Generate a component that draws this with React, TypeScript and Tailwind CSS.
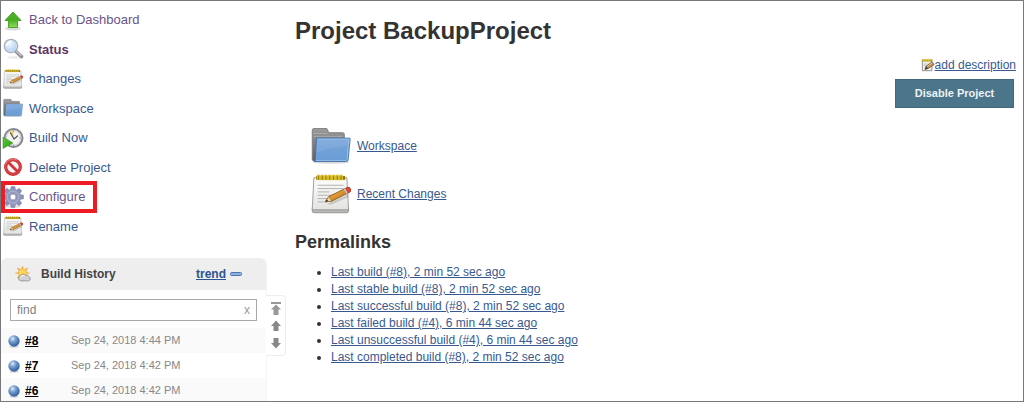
import React from "react";

type taskType = {
  label: string;
  icon: React.ReactNode;
  active?: boolean;
  visited?: boolean;
  highlighted?: boolean;
};
type buildType = {
  id: string;
  date: string;
};

type iconProps = {
  className?: string;
};

function UpArrowIcon({ className }: iconProps) {
  return (
    <svg viewBox="0 0 24 24" className={className} aria-hidden="true">
      <defs>
        <linearGradient id="green" x1="0" y1="0" x2="0" y2="1">
          <stop offset="0" stopColor="#4fb52c" />
          <stop offset="0.5" stopColor="#48ac22" />
          <stop offset="1" stopColor="#8fdc5c" />
        </linearGradient>
      </defs>
      <ellipse cx="12" cy="20.5" rx="8" ry="2" fill="#dcdcdc" />
      <path
        d="M12 4 20 12.500H16.500V19.500H7.500V12.500H4Z"
        fill="url(#green)"
        stroke="#4aa526"
        strokeLinejoin="round"
      />
    </svg>
  );
}

function SearchIcon({ className }: iconProps) {
  return (
    <svg viewBox="0 0 24 24" className={className} aria-hidden="true">
      <defs>
        <radialGradient id="lens" cx="0.4" cy="0.35" r="0.7">
          <stop offset="0" stopColor="#f2f8ff" />
          <stop offset="0.6" stopColor="#c3dcf7" />
          <stop offset="1" stopColor="#9cc0ea" />
        </radialGradient>
      </defs>
      <ellipse cx="14" cy="20.500" rx="8" ry="1.500" fill="#ececec" />
      <path d="M15 14.500 20.500 19.500" stroke="#8a8b90" strokeWidth="3.600" strokeLinecap="round" />
      <path d="M15.500 14.500 20 18.500" stroke="#c4c5c9" strokeWidth="1.500" strokeLinecap="round" />
      <circle cx="10" cy="9" r="6.600" fill="url(#lens)" stroke="#a9b0bd" strokeWidth="1.500" />
      <circle cx="10" cy="9" r="5.500" fill="none" stroke="#dce8f6" strokeWidth="0.800" />
      <path d="M6 9a4.500 4.500 0 0 1 4-4.500" fill="none" stroke="#fff" strokeWidth="1.500" />
    </svg>
  );
}

function NotepadIcon({ className }: iconProps) {
  return (
    <svg viewBox="0 0 48 48" className={className} aria-hidden="true">
      <defs>
        <linearGradient id="paper" x1="0" y1="0" x2="0" y2="1">
          <stop offset="0" stopColor="#fdfdfd" />
          <stop offset="1" stopColor="#e3e3e1" />
        </linearGradient>
        <linearGradient id="pencil" x1="0" y1="0" x2="1" y2="1">
          <stop offset="0" stopColor="#f6c26a" />
          <stop offset="0.5" stopColor="#dc9434" />
          <stop offset="1" stopColor="#8f5208" />
        </linearGradient>
      </defs>
      <path d="M1.500 41h43.500v3.500a2 2 0 0 1-2 2H3.500a2 2 0 0 1-2-2z" fill="#b9b9b7" stroke="#8b8b89" />
      <path d="M3.500 4.500h39.500L45 42a1 1 0 0 1-1 1H2.500a1 1 0 0 1-1-1z" fill="url(#paper)" stroke="#8f8f8d" />
      <path d="M8 13.500h31M8 17.500h31M8 21.500h14M8 25.500h24M8 29.500h12M8 33.500h8" stroke="#b4b4b2" strokeWidth="1.200" />
      <path d="M6 2.500h35v4.500H6z" fill="#8c7606" />
      <g fill="none" stroke="#d9bd2d" strokeWidth="1.800">
        <path d="M7.500 7.500V3a1.500 1.500 0 0 1 3 0V7.500M12 7.500V3a1.500 1.500 0 0 1 3 0V7.500M16.500 7.500V3a1.500 1.500 0 0 1 3 0V7.500M21 7.500V3a1.500 1.500 0 0 1 3 0V7.500M25.500 7.500V3a1.500 1.500 0 0 1 3 0V7.500M30 7.500V3a1.500 1.500 0 0 1 3 0V7.500M34.500 7.500V3a1.500 1.500 0 0 1 3 0V7.500" />
      </g>
      <path d="M19 36 45 24v4L24 37z" fill="#777" opacity="0.3" />
      <path d="M17 33.500 21.500 27 43 16.500a3 3 0 0 1 3 5.500L25 32.500z" fill="url(#pencil)" stroke="#87500d" />
      <path d="M17 33.500 21.500 27l3.500 5.500z" fill="#ecd6a8" stroke="#87500d" strokeWidth="0.600" />
      <path d="m17 33.500 2-3 1.500 2z" fill="#222" />
      <path d="m39.500 18.200 2-1 3 5.500-2 1z" fill="#c3c9d3" />
      <path d="m41.500 17.200 2.200-1a3.200 3.200 0 0 1 3 5.500l-2.200 1z" fill="#df4440" stroke="#a52b28" strokeWidth="0.600" />
    </svg>
  );
}

function FolderIcon({ className }: iconProps) {
  return (
    <svg viewBox="0 0 48 48" className={className} aria-hidden="true">
      <defs>
        <linearGradient id="folderBack" x1="0" y1="0" x2="0" y2="1">
          <stop offset="0" stopColor="#9b9b9b" />
          <stop offset="1" stopColor="#5f5f5f" />
        </linearGradient>
        <linearGradient id="folderFront" x1="0" y1="0" x2="0" y2="1">
          <stop offset="0" stopColor="#7ba6da" />
          <stop offset="1" stopColor="#689bd6" />
        </linearGradient>
      </defs>
      <ellipse cx="24" cy="43.500" rx="22" ry="1.800" fill="#d6d6d6" />
      <path
        d="M1.500 5a2 2 0 0 1 2-2h14.500a2 2 0 0 1 2 1.500l1.200 3.500H38a2 2 0 0 1 2 2V42H3.500a2 2 0 0 1-2-2z"
        fill="url(#folderBack)"
        stroke="#777"
      />
      <path d="M3 9h17M3 12.500h35" stroke="#b5b5b5" strokeWidth="0.800" />
      <path d="M6.500 14.500H46a1 1 0 0 1 1 1.200L44.500 41a2 2 0 0 1-2 1.500H3.500A1.500 1.500 0 0 0 5 41z" fill="url(#folderFront)" stroke="#3b6daa" />
      <path d="M7.500 15.700h38L43.300 40.500a1 1 0 0 1-1 .800H6" fill="none" stroke="#a9c8ec" strokeWidth="0.900" />
      <path d="M6.500 32c12-6 24-6 38-9l1-6.500H7.500z" fill="#fff" opacity="0.080" />
    </svg>
  );
}

function ClockIcon({ className }: iconProps) {
  return (
    <svg viewBox="0 0 24 24" className={className} aria-hidden="true">
      <defs>
        <linearGradient id="play" x1="0" y1="0" x2="1" y2="1">
          <stop offset="0" stopColor="#5ecb3b" />
          <stop offset="1" stopColor="#2a9914" />
        </linearGradient>
      </defs>
      <circle cx="12.500" cy="12" r="9" fill="#f3f3f1" stroke="#84868c" strokeWidth="2" />
      <circle cx="12.500" cy="12" r="7.400" fill="none" stroke="#c9cbd0" />
      <path d="M12.500 12V5A8 8 0 0 0 8.500 6Z" fill="#eed35a" />
      <path d="M13 13 9.500 7M13 13l3.500-3" stroke="#555" strokeWidth="1.200" strokeLinecap="round" />
      <path d="M12.500 4.500v1M19.500 12h-1M12.500 19.500v-1" stroke="#777" />
      <path d="M2 11 12 17 2 22.500Z" fill="url(#play)" stroke="#3c9a27" strokeWidth="0.600" />
    </svg>
  );
}

function ForbiddenIcon({ className }: iconProps) {
  return (
    <svg viewBox="0 0 24 24" className={className} aria-hidden="true">
      <circle cx="12" cy="12" r="7.300" fill="#f7f3f3" stroke="#c22c30" strokeWidth="3.200" />
      <circle cx="12" cy="12" r="7.300" fill="none" stroke="#d93f44" strokeWidth="2" />
      <path d="m7 7 10 10" stroke="#d03438" strokeWidth="2.800" />
      <path d="M4.500 9.500A8 8 0 0 1 16 5" fill="none" stroke="#f08a8a" strokeWidth="0.800" />
    </svg>
  );
}

function GearIcon({ className }: iconProps) {
  return (
    <svg viewBox="0 0 24 24" className={className} aria-hidden="true">
      <ellipse cx="12" cy="21.500" rx="8" ry="1.500" fill="#dedede" />
      <g fill="#8b91b6" stroke="#7b81a6" strokeWidth="0.500">
        <path d="m10.200 1.500h3.600l.8 4h-5.200zM10.200 22.500h3.600l.8-4h-5.200z" />
        <path d="m10.200 1.500h3.600l.8 4h-5.200zM10.200 22.500h3.600l.8-4h-5.200z" transform="rotate(45 12 12)" />
        <path d="m10.200 1.500h3.600l.8 4h-5.200zM10.200 22.500h3.600l.8-4h-5.200z" transform="rotate(90 12 12)" />
        <path d="m10.200 1.500h3.600l.8 4h-5.200zM10.200 22.500h3.600l.8-4h-5.200z" transform="rotate(135 12 12)" />
      </g>
      <circle cx="12" cy="12" r="5.500" fill="none" stroke="#9298bb" strokeWidth="4.800" />
      <circle cx="12" cy="12" r="5.800" fill="none" stroke="#a9aecb" strokeWidth="1.200" />
      <circle cx="12" cy="12" r="2.900" fill="#fff" stroke="#7b81a6" strokeWidth="0.700" />
    </svg>
  );
}

function WeatherIcon({ className }: iconProps) {
  return (
    <svg viewBox="0 0 16 16" className={className} aria-hidden="true">
      <g stroke="#eda34a" strokeWidth="1.200" strokeLinecap="round">
        <path d="M7.500.800v14M.800 7h13.400M2.700 2.300l9.600 9.400M12.300 2.300 2.700 11.700" />
      </g>
      <circle cx="7.500" cy="7" r="4.300" fill="#fbd65a" stroke="#eda63e" strokeWidth="0.800" />
      <path
        d="M5.500 14.800a2.300 2.300 0 0 1-.300-4.500 3 3 0 0 1 5.300-1 2.500 2.500 0 0 1 3.300 1.400 2.100 2.100 0 0 1-.300 4.100z"
        fill="#d0d1d2"
        stroke="#8c8e90"
        strokeWidth="0.800"
      />
      <path d="M5.500 11.800a2.300 2.300 0 0 1 4-1.500" fill="none" stroke="#fff" />
    </svg>
  );
}

function BallIcon({ className }: iconProps) {
  return (
    <svg viewBox="0 0 16 16" className={className} aria-hidden="true">
      <defs>
        <radialGradient id="ball" cx="0.380" cy="0.300" r="0.750">
          <stop offset="0" stopColor="#e3edf9" />
          <stop offset="0.350" stopColor="#7ba3d3" />
          <stop offset="0.750" stopColor="#4370ae" />
          <stop offset="1" stopColor="#305a96" />
        </radialGradient>
      </defs>
      <ellipse cx="8" cy="14.500" rx="5.500" ry="1.200" fill="#dadada" />
      <circle cx="8" cy="8" r="6.500" fill="url(#ball)" />
    </svg>
  );
}

function EditIcon({ className }: iconProps) {
  return (
    <svg viewBox="0 0 16 16" className={className} aria-hidden="true">
      <path d="M1.500 3h11v11.500h-11z" fill="#f1f1ef" stroke="#858583" />
      <path d="M1 1.500h12V4H1z" fill="#b39b18" />
      <path d="M2.500 1v3M4.500 1v3M6.500 1v3M8.500 1v3M10.500 1v3" stroke="#e9d45c" strokeWidth="0.900" />
      <path d="M3 7h6M3 9h4" stroke="#bbb" />
      <path d="M4.500 13 6 9.500l6.500-5 2.500 3-7 4.500z" fill="#c8924a" stroke="#5e4a33" strokeWidth="0.900" />
      <path d="m4.500 13 1.500-3.500L8 12z" fill="#3d3a36" />
      <path d="M7 9.800 13 5.300" stroke="#f0d09a" />
    </svg>
  );
}

const tasks: taskType[] = [
  { label: "Back to Dashboard", icon: <UpArrowIcon className="size-6" />, visited: true },
  { label: "Status", icon: <SearchIcon className="size-6" />, active: true },
  { label: "Changes", icon: <NotepadIcon className="size-5" /> },
  { label: "Workspace", icon: <FolderIcon className="size-5" /> },
  { label: "Build Now", icon: <ClockIcon className="size-6" /> },
  { label: "Delete Project", icon: <ForbiddenIcon className="size-6" /> },
  { label: "Configure", icon: <GearIcon className="size-6" />, visited: true, highlighted: true },
  { label: "Rename", icon: <NotepadIcon className="size-5" /> },
];

const builds: buildType[] = [
  { id: "#8", date: "Sep 24, 2018 4:44 PM" },
  { id: "#7", date: "Sep 24, 2018 4:42 PM" },
  { id: "#6", date: "Sep 24, 2018 4:42 PM" },
];

const permalinks = [
  "Last build (#8), 2 min 52 sec ago",
  "Last stable build (#8), 2 min 52 sec ago",
  "Last successful build (#8), 2 min 52 sec ago",
  "Last failed build (#4), 6 min 44 sec ago",
  "Last unsuccessful build (#4), 6 min 44 sec ago",
  "Last completed build (#8), 2 min 52 sec ago",
];

function TaskList() {
  return (
    <nav>
      <ul className="grid h-[236px] auto-rows-fr text-[13px]">
        {tasks.map((task) => (
          <li key={task.label} className="relative flex items-center">
            <a href="#" className="flex items-center gap-1">
              <span className="flex w-6 justify-center">{task.icon}</span>
              <span
                className={
                  task.active
                    ? "font-bold text-[#5c3566]"
                    : task.visited
                      ? "text-[#6a5488]"
                      : "text-[#37598f]"
                }>
                {task.label}
              </span>
            </a>
            {task.highlighted && (
              <span className="pointer-events-none absolute -top-px left-0 h-8 w-24 border-4 border-[#ed1c24]" />
            )}
          </li>
        ))}
      </ul>
    </nav>
  );
}

function BuildHistory() {
  return (
    <section className="relative w-[266px] rounded-t-md border-r border-[#f4f4f4] bg-white">
      <header className="flex h-8 items-center rounded-t-md bg-[#eeeeee] pr-6 pl-3.5">
        <WeatherIcon className="size-4" />
        <h2 className="ml-2.5 flex-1 text-xs font-bold text-[#444]">Build History</h2>
        <a href="#" className="text-xs font-bold text-[#2c5490] underline">
          trend
        </a>
        <button type="button" aria-label="Collapse" className="ml-1 flex">
          <svg viewBox="0 0 12 4" className="h-1 w-3" aria-hidden="true">
            <rect x="0.500" y="0.500" width="11" height="3" rx="1" fill="#8fb0dc" stroke="#4a75b0" />
          </svg>
        </button>
      </header>
      <div className="px-[9px] pt-[9px] pb-[7px]">
        <div className="flex h-[22px] items-center border border-[#aaa] bg-white px-1.5">
          <input
            type="text"
            aria-label="Filter builds"
            placeholder="find"
            className="w-full min-w-0 flex-1 text-xs outline-none placeholder:text-[#808080]"
          />
          <button type="button" aria-label="Clear" className="text-xs leading-none text-[#999]">
            x
          </button>
        </div>
      </div>
      <table className="w-full text-[11px]">
        <tbody>
          {builds.map((build) => (
            <tr key={build.id} className="h-[25px] odd:bg-[#fafafa]">
              <td className="w-[70px] pl-1.5">
                <span className="flex items-center gap-1">
                  <BallIcon className="size-3.5" />
                  <a href="#" className="text-xs font-bold text-black underline">
                    {build.id}
                  </a>
                </span>
              </td>
              <td className="text-[#888]">{build.date}</td>
            </tr>
          ))}
        </tbody>
      </table>
      {/* pager sticks out of the right side of the panel */}
      <div className="absolute top-[37px] left-full flex h-[61px] w-5 flex-col items-center justify-around rounded-r border border-l-0 border-[#eee] bg-white py-1">
        <button type="button" aria-label="Newest">
          <svg viewBox="0 0 12 14" className="h-3.5 w-3 text-[#999]" fill="currentColor" aria-hidden="true">
            <path d="M1 0h10v2H1zM6 2.500l5 5H8.500V13h-5V7.500H1z" />
          </svg>
        </button>
        <button type="button" aria-label="Newer">
          <svg viewBox="0 0 12 12" className="size-3 text-[#888]" fill="currentColor" aria-hidden="true">
            <path d="m6 .500 5 5.500H8.500V11h-5V6H1z" />
          </svg>
        </button>
        <button type="button" aria-label="Older">
          <svg viewBox="0 0 12 12" className="size-3 text-[#888]" fill="currentColor" aria-hidden="true">
            <path d="m6 11.500 5-5.500H8.500V1h-5V6H1z" />
          </svg>
        </button>
      </div>
    </section>
  );
}

function App() {
  return (
    <div className="flex h-screen overflow-hidden border border-[#77787b] bg-white font-['Liberation_Sans',Arial,sans-serif] text-[#333]">
      <aside className="flex w-[294px] shrink-0 flex-col gap-[17px] pt-1">
        <TaskList />
        <BuildHistory />
      </aside>
      <main className="min-w-0 flex-1 pt-4 pr-[7px] text-xs">
        <h1 className="text-2xl leading-7 font-bold">Project BackupProject</h1>
        <div className="mt-3 flex flex-col items-end gap-1.5">
          <a href="#" className="flex items-center text-[#37598f]">
            <EditIcon className="size-3.5" />
            <span className="underline">add description</span>
          </a>
          <button
            type="button"
            className="mr-0.5 h-[29px] w-[119px] border border-[#43697c] bg-[#4b758b] text-[11px] font-bold text-[#eef3f5]">
            Disable Project
          </button>
        </div>
        <div className="mt-[18px] flex flex-col gap-2 pl-4">
          <a href="#" className="flex items-center gap-1.5 text-[#37598f]">
            <FolderIcon className="size-10" />
            <span className="underline">Workspace</span>
          </a>
          <a href="#" className="flex items-center gap-1.5 text-[#37598f]">
            <NotepadIcon className="size-10" />
            <span className="underline">Recent Changes</span>
          </a>
        </div>
        <h2 className="mt-4 text-lg leading-6 font-bold">Permalinks</h2>
        <ul className="mt-2.5 list-disc pl-9 leading-[17px]">
          {permalinks.map((text) => (
            <li key={text}>
              <a href="#" className="text-[#37598f] underline">
                {text}
              </a>
            </li>
          ))}
        </ul>
      </main>
    </div>
  );
}

export default App;
